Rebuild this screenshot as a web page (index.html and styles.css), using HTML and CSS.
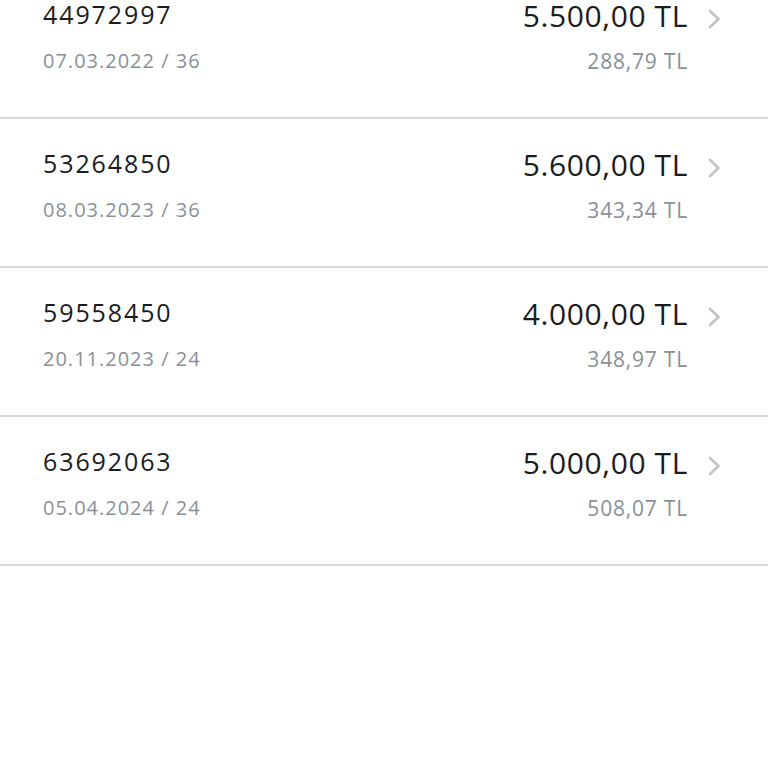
FILE: index.html
```html
<!DOCTYPE html>
<html lang="tr">
<head>
<meta charset="utf-8">
<title>Krediler</title>
<link rel="stylesheet" href="styles.css">
</head>
<body>
<ul class="list">
  <li class="row">
    <div class="left">
      <div class="num">44972997</div>
      <div class="date">07.03.2022 / 36</div>
    </div>
    <div class="right">
      <div class="amount">5.500,00 TL</div>
      <div class="inst">288,79 TL</div>
    </div>
    <svg class="chev" width="15" height="20" viewBox="0 0 15 20"><path d="M3 2 L11.5 10 L3 18" fill="none" stroke="#c4c4c4" stroke-width="2.6" stroke-linecap="round" stroke-linejoin="round"/></svg>
  </li>
  <li class="row">
    <div class="left">
      <div class="num">53264850</div>
      <div class="date">08.03.2023 / 36</div>
    </div>
    <div class="right">
      <div class="amount">5.600,00 TL</div>
      <div class="inst">343,34 TL</div>
    </div>
    <svg class="chev" width="15" height="20" viewBox="0 0 15 20"><path d="M3 2 L11.5 10 L3 18" fill="none" stroke="#c4c4c4" stroke-width="2.6" stroke-linecap="round" stroke-linejoin="round"/></svg>
  </li>
  <li class="row">
    <div class="left">
      <div class="num">59558450</div>
      <div class="date">20.11.2023 / 24</div>
    </div>
    <div class="right">
      <div class="amount">4.000,00 TL</div>
      <div class="inst">348,97 TL</div>
    </div>
    <svg class="chev" width="15" height="20" viewBox="0 0 15 20"><path d="M3 2 L11.5 10 L3 18" fill="none" stroke="#c4c4c4" stroke-width="2.6" stroke-linecap="round" stroke-linejoin="round"/></svg>
  </li>
  <li class="row">
    <div class="left">
      <div class="num">63692063</div>
      <div class="date">05.04.2024 / 24</div>
    </div>
    <div class="right">
      <div class="amount">5.000,00 TL</div>
      <div class="inst">508,07 TL</div>
    </div>
    <svg class="chev" width="15" height="20" viewBox="0 0 15 20"><path d="M3 2 L11.5 10 L3 18" fill="none" stroke="#c4c4c4" stroke-width="2.6" stroke-linecap="round" stroke-linejoin="round"/></svg>
  </li>
</ul>
</body>
</html>
```
FILE: styles.css
```css
html, body {
  margin: 0;
  padding: 0;
  background: #ffffff;
  font-family: "Open Sans", "Noto Sans", sans-serif;
  overflow: hidden;
}

.list {
  list-style: none;
  margin: -30px 0 0 0;
  padding: 0;
}

.row {
  display: flex;
  align-items: flex-start;
  height: 147px;
  border-bottom: 2px solid #d9d9d9;
  padding: 0 46px 0 43px;
}

.left {
  flex: 1;
  padding-top: 29px;
}

.num {
  font-size: 25px;
  line-height: 30px;
  letter-spacing: 1.9px;
  color: #1c1c1c;
}

.date {
  margin-top: 20px;
  font-size: 20px;
  line-height: 24px;
  letter-spacing: 1px;
  color: #8a9098;
}

.right {
  padding-top: 28px;
  text-align: right;
}

.amount {
  font-size: 30px;
  line-height: 36px;
  font-weight: 500;
  letter-spacing: 0.6px;
  color: #1c1c1c;
}

.inst {
  margin-top: 15px;
  font-size: 21px;
  line-height: 24px;
  letter-spacing: 0.8px;
  color: #8a9098;
}

.chev {
  margin: 39px 0 0 19px;
  flex-shrink: 0;
}
```
